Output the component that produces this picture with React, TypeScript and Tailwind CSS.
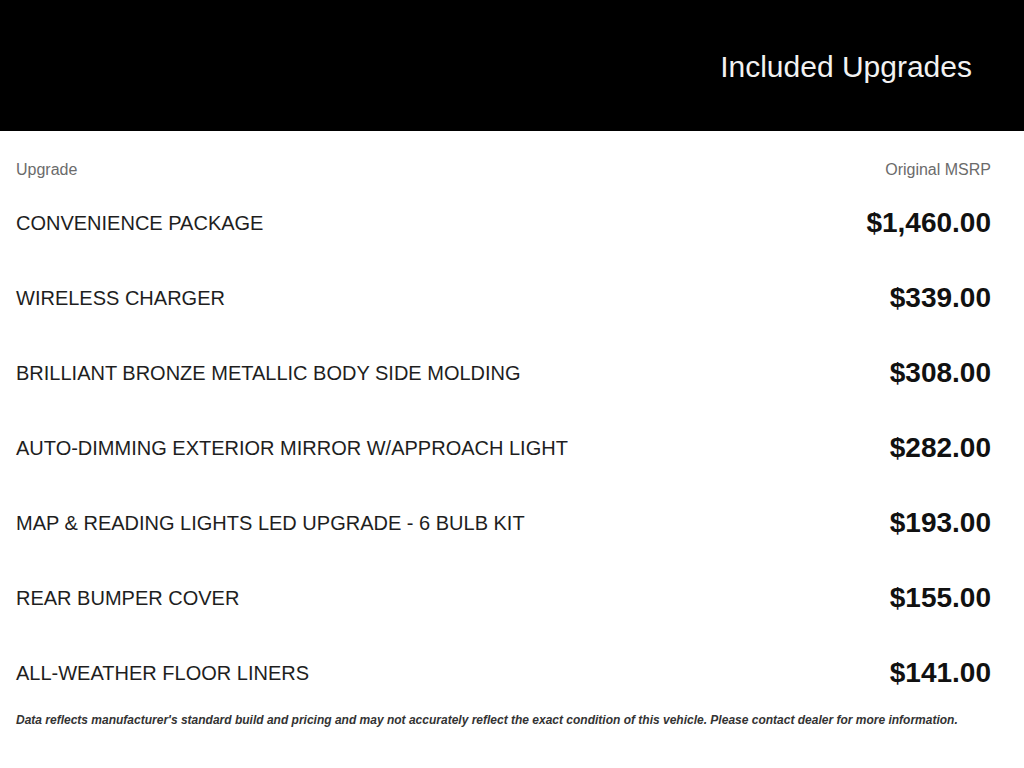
const upgrades = [
  { name: 'CONVENIENCE PACKAGE', price: '$1,460.00' },
  { name: 'WIRELESS CHARGER', price: '$339.00' },
  { name: 'BRILLIANT BRONZE METALLIC BODY SIDE MOLDING', price: '$308.00' },
  { name: 'AUTO-DIMMING EXTERIOR MIRROR W/APPROACH LIGHT', price: '$282.00' },
  { name: 'MAP & READING LIGHTS LED UPGRADE - 6 BULB KIT', price: '$193.00' },
  { name: 'REAR BUMPER COVER', price: '$155.00' },
  { name: 'ALL-WEATHER FLOOR LINERS', price: '$141.00' },
]

export default function App() {
  return (
    <div className="h-[768px] w-[1024px] overflow-hidden bg-white font-['Liberation_Sans',Arial,sans-serif]">
      <header className="flex h-[131px] items-center justify-end bg-black pr-[52px] pt-[2px]">
        <h1 className="text-[30px] leading-none text-[#f2f2f2]">Included Upgrades</h1>
      </header>

      <div className="px-4 pr-[33px] pt-[24px]">
        <div className="flex h-[30px] items-center justify-between text-[16px] text-[#6b6b6b]">
          <span>Upgrade</span>
          <span>Original MSRP</span>
        </div>

        {upgrades.map((u) => (
          <div key={u.name} className="flex h-[75px] items-center justify-between">
            <span className="text-[20px] text-[#1e1e1e]">{u.name}</span>
            <span className="text-[28px] font-bold text-[#111]">{u.price}</span>
          </div>
        ))}

        <p className="mt-[2px] text-[12px] font-bold italic leading-4 text-[#333]">
          Data reflects manufacturer's standard build and pricing and may not accurately reflect the exact condition of this vehicle. Please contact dealer for more information.
        </p>
      </div>
    </div>
  )
}
